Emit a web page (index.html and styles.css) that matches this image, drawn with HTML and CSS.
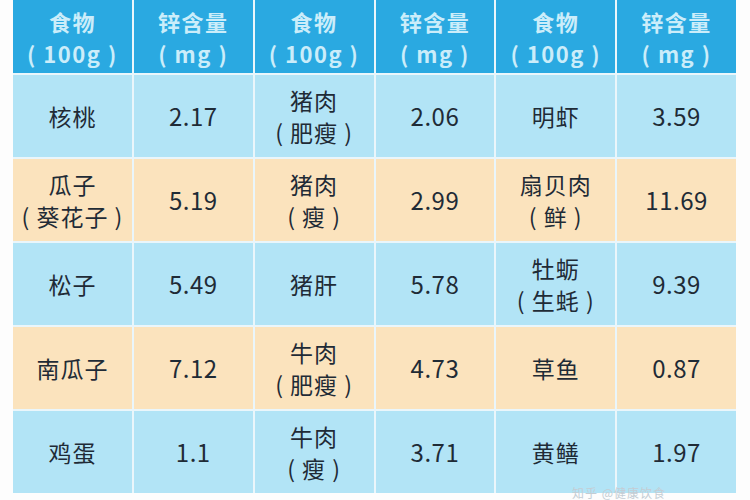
FILE: index.html
```html
<!DOCTYPE html>
<html lang="zh">
<head>
<meta charset="utf-8">
<link rel="stylesheet" href="styles.css">
</head>
<body>
<div class="page">
  <div class="table">
    <div class="cell head">食物<br>(&nbsp;100g&nbsp;)</div>
    <div class="cell head">锌含量<br>(&nbsp;mg&nbsp;)</div>
    <div class="cell head">食物<br>(&nbsp;100g&nbsp;)</div>
    <div class="cell head">锌含量<br>(&nbsp;mg&nbsp;)</div>
    <div class="cell head">食物<br>(&nbsp;100g&nbsp;)</div>
    <div class="cell head">锌含量<br>(&nbsp;mg&nbsp;)</div>

    <div class="cell blue">核桃</div>
    <div class="cell blue num">2.17</div>
    <div class="cell blue">猪肉<br>(&nbsp;肥瘦&nbsp;)</div>
    <div class="cell blue num">2.06</div>
    <div class="cell blue">明虾</div>
    <div class="cell blue num">3.59</div>

    <div class="cell orange">瓜子<br>(&nbsp;葵花子&nbsp;)</div>
    <div class="cell orange num">5.19</div>
    <div class="cell orange">猪肉<br>(&nbsp;瘦&nbsp;)</div>
    <div class="cell orange num">2.99</div>
    <div class="cell orange">扇贝肉<br>(&nbsp;鲜&nbsp;)</div>
    <div class="cell orange num">11.69</div>

    <div class="cell blue">松子</div>
    <div class="cell blue num">5.49</div>
    <div class="cell blue">猪肝</div>
    <div class="cell blue num">5.78</div>
    <div class="cell blue">牡蛎<br>(&nbsp;生蚝&nbsp;)</div>
    <div class="cell blue num">9.39</div>

    <div class="cell orange">南瓜子</div>
    <div class="cell orange num">7.12</div>
    <div class="cell orange">牛肉<br>(&nbsp;肥瘦&nbsp;)</div>
    <div class="cell orange num">4.73</div>
    <div class="cell orange">草鱼</div>
    <div class="cell orange num">0.87</div>

    <div class="cell blue">鸡蛋</div>
    <div class="cell blue num">1.1</div>
    <div class="cell blue">牛肉<br>(&nbsp;瘦&nbsp;)</div>
    <div class="cell blue num">3.71</div>
    <div class="cell blue">黄鳝</div>
    <div class="cell blue num">1.97</div>
  </div>
  <div class="watermark">知乎 @健康饮食</div>
</div>
</body>
</html>
```

FILE: styles.css
```css
html, body {
  margin: 0;
  padding: 0;
  background: #fdfdfd;
  width: 750px;
  height: 500px;
  overflow: hidden;
}
.page {
  position: relative;
  width: 750px;
  height: 500px;
  padding-left: 13px;
  box-sizing: border-box;
  font-family: "Noto Sans CJK SC", "Noto Sans", sans-serif;
}
.table {
  display: grid;
  width: 723px;
  grid-template-columns: repeat(6, 1fr);
  grid-template-rows: 73px repeat(5, 82px);
  column-gap: 2px;
  row-gap: 2px;
  background: #eaf6fb;
}
.cell {
  display: flex;
  align-items: center;
  justify-content: center;
  text-align: center;
  font-size: 23px;
  line-height: 32px;
  color: #1f2b36;
  letter-spacing: 1px;
}
.head {
  background: #2aa9e1;
  color: #cbedfa;
  font-weight: bold;
  font-size: 22px;
  letter-spacing: 1.5px;
}
.blue {
  background: #b2e4f6;
}
.orange {
  background: #fbe3bd;
}
.num {
  font-size: 24px;
  letter-spacing: 0.5px;
}
.watermark {
  position: absolute;
  left: 572px;
  top: 486px;
  font-size: 12px;
  line-height: 13px;
  color: #c4cdd4;
  letter-spacing: 1px;
}
```
